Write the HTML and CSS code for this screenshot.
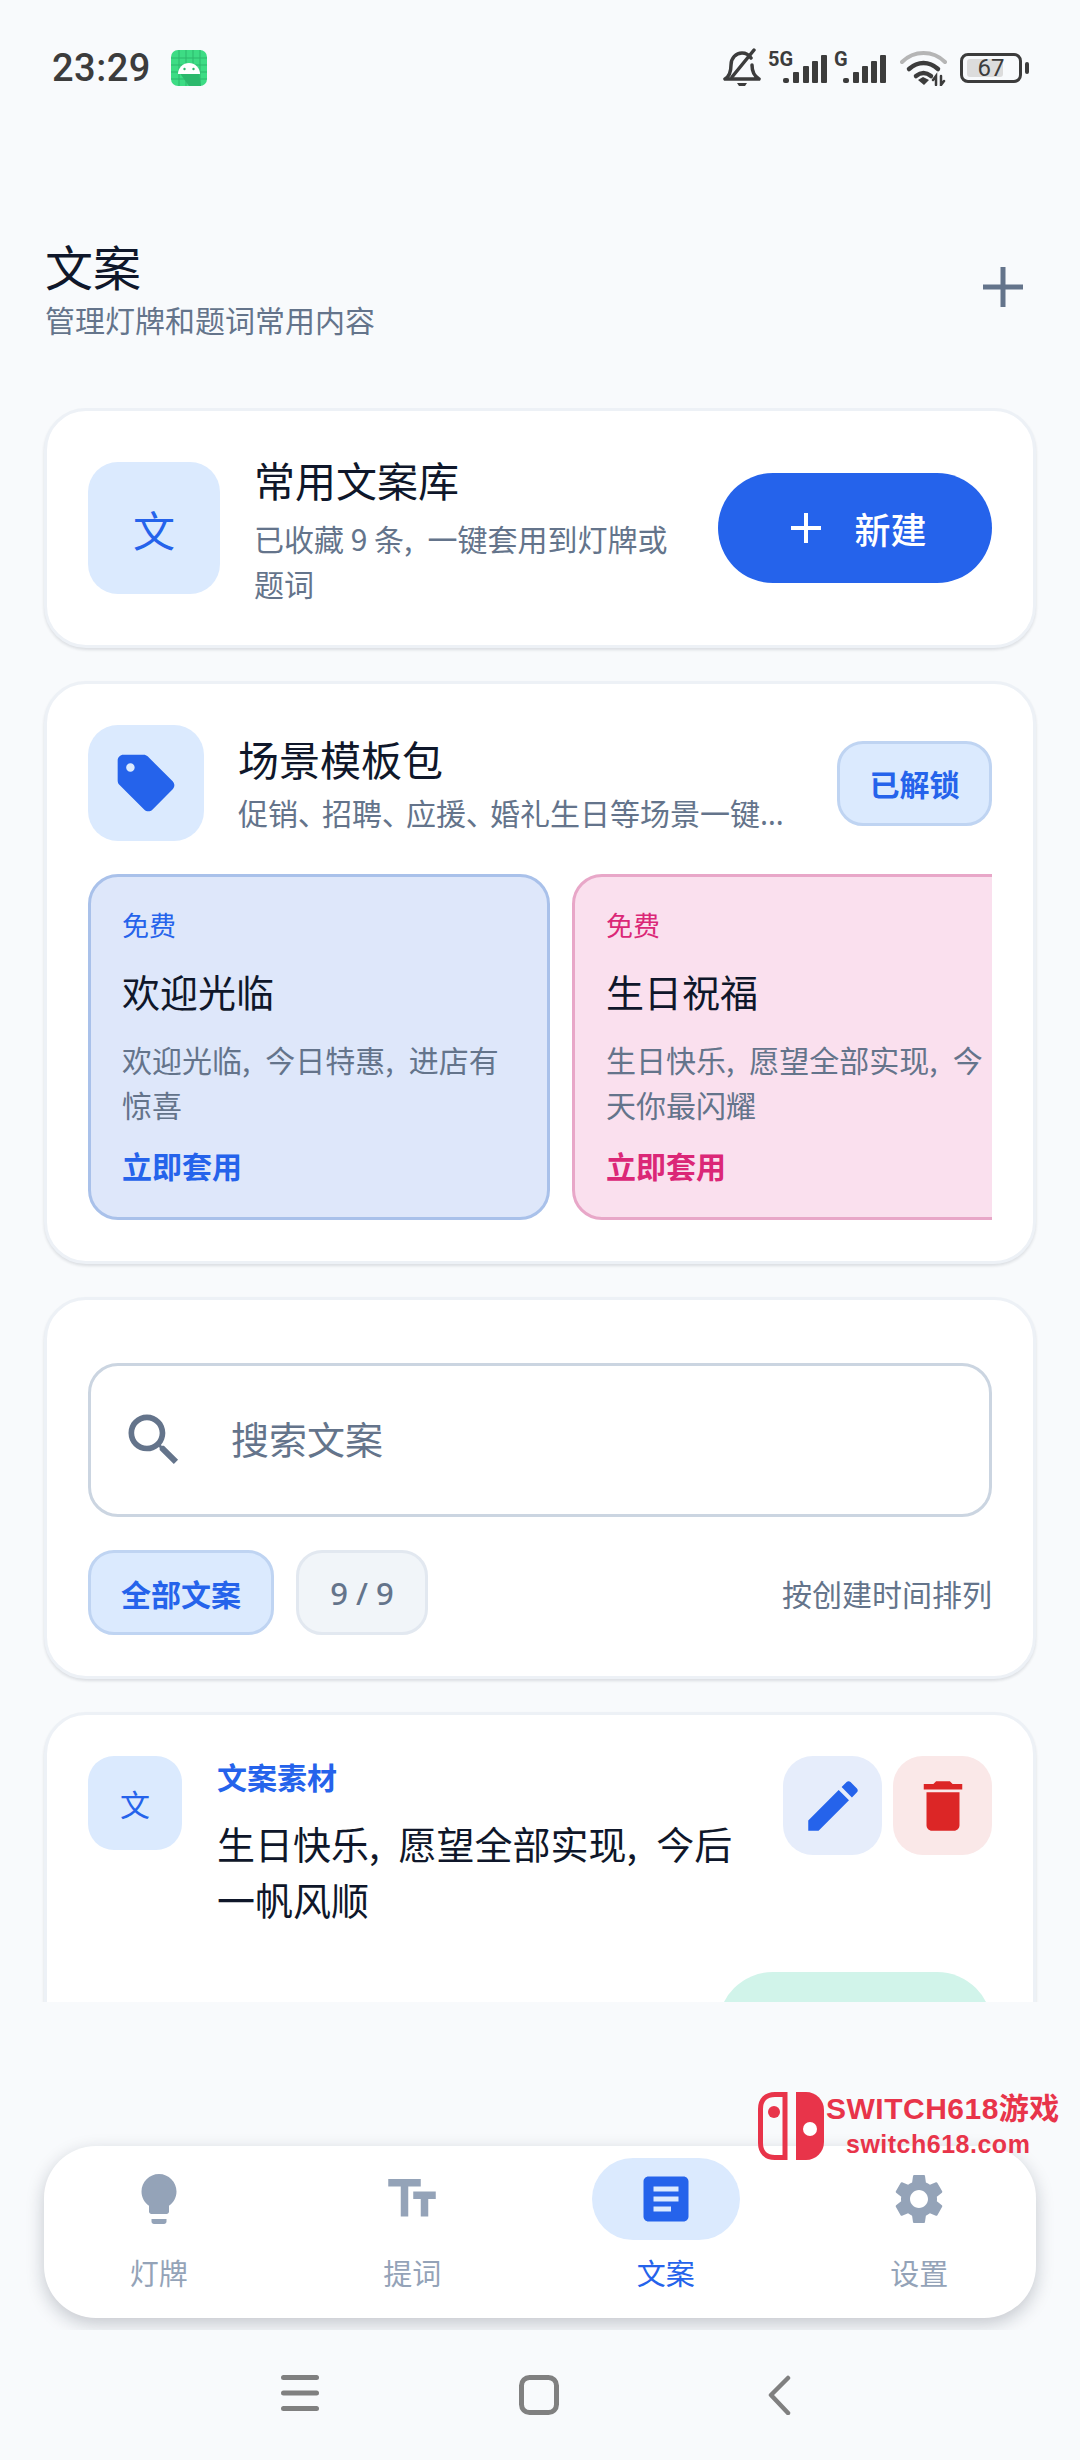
FILE: index.html
```html
<!DOCTYPE html>
<html lang="zh-CN">
<head>
  <meta charset="UTF-8">
  <meta name="viewport" content="width=device-width, initial-scale=1.0">
  <title>文案</title>
  <link rel="stylesheet" href="styles.css">
</head>
<body>
  <div class="phone">
    <div class="status-bar">
      <div class="status-left">
        <span class="clock">23:29</span>
        <svg class="app-badge" width="36" height="36" viewBox="0 0 36 36">
          <rect width="36" height="36" rx="7" fill="#3ddc84"/>
          <path d="M8 22H28L30 36H18z" fill="#2cb86c"/>
          <path d="M8 0V36M15 0V36M22 0V36M29 0V36M0 8H36M0 15H36M0 22H36M0 29H36" stroke="#2cb86c" stroke-width="1"/>
          <path d="M7 24a11 11 0 0 1 22 0z" fill="#fff"/>
          <circle cx="13.500" cy="19" r="1.200" fill="#2cb86c"/>
          <circle cx="22.500" cy="19" r="1.200" fill="#2cb86c"/>
        </svg>
      </div>
      <div class="status-right">
        <svg class="st-bell" width="38" height="40" viewBox="0 0 38 40" fill="none" stroke="#3c3c3c" stroke-width="3.500" stroke-linecap="round" stroke-linejoin="round">
          <path d="M2 31c5-3 6-8 6-14 0-7 5-12 11-12 4 0 7 2 9 5M29 17c0 6 2 11 7 14H2"/>
          <path d="M31 2 9 29"/>
          <path d="M14 35h10l-2 3h-6z" fill="#3c3c3c" stroke="none"/>
        </svg>
        <svg class="st-sim1" width="60" height="34" viewBox="0 0 60 34" fill="#3c3c3c">
          <text x="0" y="15" class="net-label">5G</text>
          <rect x="15" y="27" width="6" height="5" rx="2"/>
          <rect x="25" y="21" width="6" height="11" rx="1"/>
          <rect x="35" y="15" width="6" height="17" rx="1"/>
          <rect x="44" y="10" width="6" height="22" rx="1"/>
          <rect x="53" y="4" width="6" height="28" rx="1"/>
        </svg>
        <svg class="st-sim2" width="53" height="34" viewBox="0 0 53 34" fill="#3c3c3c">
          <text x="0" y="15" class="net-label">G</text>
          <rect x="9" y="27" width="6" height="5" rx="2"/>
          <rect x="19" y="21" width="6" height="11" rx="1"/>
          <rect x="28" y="15" width="6" height="17" rx="1"/>
          <rect x="37" y="10" width="6" height="22" rx="1"/>
          <rect x="46" y="4" width="6" height="28" rx="1"/>
        </svg>
        <svg class="st-wifi" width="48" height="36" viewBox="0 0 48 36" fill="none" stroke-linecap="round">
          <path d="M2 12C14 0 33 0 45 12" stroke="#b5b5b5" stroke-width="4"/>
          <path d="M9 19c9-8 20-8 29 0" stroke="#3c3c3c" stroke-width="4.500"/>
          <path d="M16 26c5-4 10-4 15 0" stroke="#3c3c3c" stroke-width="4.500"/>
          <path d="M18 30l5-3 6 3-5 5z" fill="#3c3c3c"/>
          <path d="M36 35v-9l-3 4M41 26v9l3-4" stroke="#3c3c3c" stroke-width="2.500"/>
        </svg>
        <div class="battery">
          <div class="battery-body">
            <span class="battery-fill"></span>
            <span class="battery-num">67</span>
          </div>
          <span class="battery-tip"></span>
        </div>
      </div>
    </div>

    <header class="page-head">
      <div>
        <h1>文案</h1>
        <p>管理灯牌和题词常用内容</p>
      </div>
      <svg class="head-add" width="40" height="40" viewBox="0 0 40 40" stroke="#64748b" stroke-width="5"><path d="M20 0V40M0 20H40"/></svg>
    </header>

    <main class="scroller">
      <section class="card library">
        <div class="wen-box">文</div>
        <div class="library-text">
          <h2>常用文案库</h2>
          <p>已收藏 9 条<i>,</i>一键套用到灯牌或题词</p>
        </div>
        <button class="new-btn">
          <svg width="30" height="30" viewBox="0 0 30 30" stroke="#fff" stroke-width="4"><path d="M15 0V30M0 15H30"/></svg>
          <span>新建</span>
        </button>
      </section>

      <section class="card packs">
        <div class="packs-head">
          <div class="tag-box">
            <svg width="68" height="68" viewBox="0 0 24 24" fill="#2563eb"><path d="M21.41 11.41l-8.83-8.83c-.37-.37-.88-.58-1.41-.58H4c-1.1 0-2 .9-2 2v7.17c0 .53.21 1.04.59 1.41l8.83 8.83c.78.78 2.05.78 2.83 0l7.17-7.17c.78-.78.78-2.04-.01-2.83zM6.5 8C5.67 8 5 7.33 5 6.5S5.67 5 6.5 5 8 5.67 8 6.5 7.33 8 6.5 8z"/></svg>
          </div>
          <div class="packs-text">
            <h2>场景模板包</h2>
            <p>促销<u>、</u>招聘<u>、</u>应援<u>、</u>婚礼生日等场景一键套用模板</p>
          </div>
          <span class="unlocked">已解锁</span>
        </div>
        <div class="pack-row">
          <article class="pack pack-blue">
            <small>免费</small>
            <h3>欢迎光临</h3>
            <p>欢迎光临<i>,</i>今日特惠<i>,</i>进店有惊喜</p>
            <b>立即套用</b>
          </article>
          <article class="pack pack-pink">
            <small>免费</small>
            <h3>生日祝福</h3>
            <p>生日快乐<i>,</i>愿望全部实现<i>,</i>今天你最闪耀</p>
            <b>立即套用</b>
          </article>
        </div>
      </section>

      <section class="card finder">
        <div class="search">
          <svg width="68" height="68" viewBox="0 0 24 24" fill="#64748b"><path d="M15.5 14h-.79l-.28-.27C15.41 12.59 16 11.11 16 9.5 16 5.91 13.09 3 9.5 3S3 5.91 3 9.5 5.91 16 9.5 16c1.61 0 3.09-.59 4.23-1.57l.27.28v.79l5 4.99L20.49 19l-4.99-5zm-6 0C7.01 14 5 11.99 5 9.5S7.01 5 9.5 5 14 7.01 14 9.5 11.99 14 9.5 14z"/></svg>
          <span>搜索文案</span>
        </div>
        <div class="filters">
          <span class="chip chip-on">全部文案</span>
          <span class="chip chip-count">9 / 9</span>
          <span class="sort">按创建时间排列</span>
        </div>
      </section>

      <section class="card entry">
        <div class="entry-top">
          <div class="entry-icon">文</div>
          <div class="entry-text">
            <h4>文案素材</h4>
            <p>生日快乐<i>,</i>愿望全部实现<i>,</i>今后一帆风顺</p>
          </div>
          <div class="entry-actions">
            <span class="act act-edit">
              <svg width="66" height="66" viewBox="0 0 24 24" fill="#2563eb"><path d="M3 17.25V21h3.75L17.81 9.94l-3.75-3.75L3 17.25zM20.71 7.04c.39-.39.39-1.02 0-1.41l-2.34-2.34c-.39-.39-1.02-.39-1.41 0l-1.83 1.83 3.75 3.75 1.83-1.83z"/></svg>
            </span>
            <span class="act act-del">
              <svg width="66" height="66" viewBox="0 0 24 24" fill="#dc2626"><path d="M6 19c0 1.1.9 2 2 2h8c1.1 0 2-.9 2-2V7H6v12zM19 4h-3.5l-1-1h-5l-1 1H5v2h14V4z"/></svg>
            </span>
          </div>
        </div>
        <div class="entry-apply"></div>
      </section>
    </main>

    <div class="nav-wrap">
      <nav class="tabbar">
        <div class="tab">
          <span class="tab-icon"><svg width="60" height="60" viewBox="0 0 24 24" fill="#94a3b8"><path d="M9 21c0 .55.45 1 1 1h4c.55 0 1-.45 1-1v-1H9v1zm3-19C8.14 2 5 5.14 5 9c0 2.38 1.19 4.47 3 5.74V17c0 .55.45 1 1 1h6c.55 0 1-.45 1-1v-2.26c1.81-1.27 3-3.36 3-5.74 0-3.86-3.14-7-7-7z"/></svg></span>
          <span>灯牌</span>
        </div>
        <div class="tab">
          <span class="tab-icon"><svg width="60" height="60" viewBox="0 0 24 24" fill="#94a3b8"><path d="M2.5 4v3h5v12h3V7h5V4h-13zm19 5h-9v3h3v7h3v-7h3V9z"/></svg></span>
          <span>提词</span>
        </div>
        <div class="tab tab-on">
          <span class="tab-icon"><svg width="60" height="60" viewBox="0 0 24 24" fill="#2563eb"><path d="M19 3H5c-1.1 0-2 .9-2 2v14c0 1.1.9 2 2 2h14c1.1 0 2-.9 2-2V5c0-1.1-.9-2-2-2zm-5 14H7v-2h7v2zm3-4H7v-2h10v2zm0-4H7V7h10v2z"/></svg></span>
          <span>文案</span>
        </div>
        <div class="tab">
          <span class="tab-icon"><svg width="60" height="60" viewBox="0 0 24 24" fill="#94a3b8"><path d="M19.14 12.94c.04-.3.06-.61.06-.94 0-.32-.02-.64-.07-.94l2.03-1.58c.18-.14.23-.41.12-.61l-1.92-3.32c-.12-.22-.37-.29-.59-.22l-2.39.96c-.5-.38-1.03-.7-1.62-.94l-.36-2.54c-.04-.24-.24-.41-.48-.41h-3.84c-.24 0-.43.17-.47.41l-.36 2.54c-.59.24-1.13.57-1.62.94l-2.39-.96c-.22-.08-.47 0-.59.22L2.74 8.87c-.12.21-.08.47.12.61l2.03 1.58c-.05.3-.09.63-.09.94s.02.64.07.94l-2.03 1.58c-.18.14-.23.41-.12.61l1.92 3.32c.12.22.37.29.59.22l2.39-.96c.5.38 1.03.7 1.62.94l.36 2.54c.05.24.24.41.48.41h3.84c.24 0 .44-.17.47-.41l.36-2.54c.59-.24 1.13-.56 1.62-.94l2.39.96c.22.08.47 0 .59-.22l1.92-3.32c.12-.22.07-.47-.12-.61l-2.01-1.58zM12 15.6c-1.98 0-3.6-1.62-3.6-3.6s1.62-3.6 3.6-3.6 3.6 1.62 3.6 3.6-1.62 3.6-3.6 3.6z"/></svg></span>
          <span>设置</span>
        </div>
      </nav>
    </div>

    <div class="sys-nav">
      <svg width="38" height="36" viewBox="0 0 38 36" fill="#808080"><rect width="38" height="5" rx="2.500"/><rect y="15.500" width="38" height="5" rx="2.500"/><rect y="31" width="38" height="5" rx="2.500"/></svg>
      <svg width="40" height="40" viewBox="0 0 40 40" fill="none" stroke="#808080" stroke-width="5"><rect x="2.500" y="2.500" width="35" height="35" rx="8"/></svg>
      <svg class="sys-back" width="24" height="40" viewBox="0 0 24 40" fill="none" stroke="#808080" stroke-width="4.500" stroke-linecap="round" stroke-linejoin="round"><path d="M21 3 4 20l17 18"/></svg>
    </div>

    <!-- site stamp sits over the tab bar -->
    <div class="stamp">
      <svg width="66" height="68" viewBox="0 0 66 68">
        <path d="M27 2.500H17C8 2.500 2.500 8 2.500 17v34c0 9 5.500 14.500 14.500 14.500h10z" fill="none" stroke="#e8344a" stroke-width="5"/>
        <circle cx="16" cy="20" r="6" fill="#e8344a"/>
        <path d="M38 0h10c10 0 18 8 18 18v32c0 10-8 18-18 18H38z" fill="#e8344a"/>
        <circle cx="52" cy="37" r="7" fill="#fff"/>
      </svg>
      <div class="stamp-text">
        <div class="stamp-name">SWITCH618游戏</div>
        <div class="stamp-url">switch618.com</div>
      </div>
    </div>
  </div>
</body>
</html>
```

FILE: styles.css
```css
* {
  margin: 0;
  padding: 0;
  box-sizing: border-box;
}

body {
  background: #f8fafc;
  color: #0f172a;
  font-family: "Noto Sans CJK SC", "Noto Sans", sans-serif;
}

.phone {
  width: 1080px;
  height: 2460px;
  display: flex;
  flex-direction: column;
  position: relative;
  overflow: hidden;
}

/* narrow comma used through the copy */
i {
  font-style: normal;
  margin-right: 0.5em;
}

/* status bar */
.status-bar {
  height: 135px;
  flex: none;
  padding: 0 51px 0 52px;
  display: flex;
  justify-content: space-between;
  align-items: center;
}

.status-left {
  display: flex;
  align-items: center;
  gap: 20px;
}

.clock {
  font-family: Roboto, sans-serif;
  font-size: 38px;
  font-weight: 500;
  letter-spacing: 0.5px;
  color: #3c3c3c;
}

.status-right {
  display: flex;
  align-items: center;
}

.st-sim1 { margin-left: 7px; }
.st-sim2 { margin-left: 6px; }
.st-wifi { margin-left: 13px; }

.net-label {
  font-family: Roboto, sans-serif;
  font-size: 20px;
  font-weight: 700;
}

.battery {
  display: flex;
  align-items: center;
  gap: 3px;
  margin-left: 12px;
}

.battery-body {
  width: 62px;
  height: 30px;
  border: 3px solid #3c3c3c;
  border-radius: 8px;
  position: relative;
  display: flex;
  align-items: center;
  justify-content: center;
}

.battery-fill {
  position: absolute;
  left: 4px;
  top: 3px;
  bottom: 3px;
  width: 36px;
  background: #dcdcdc;
  border-radius: 3px;
}

.battery-num {
  position: relative;
  font-family: Roboto, sans-serif;
  font-size: 24px;
  color: #3c3c3c;
}

.battery-tip {
  width: 4px;
  height: 12px;
  background: #3c3c3c;
  border-radius: 2px;
}

/* page heading */
.page-head {
  flex: none;
  height: 273px;
  padding: 101px 57px 64px 45px;
  display: flex;
  justify-content: space-between;
  align-items: flex-start;
}

.page-head h1 {
  font-size: 48px;
  font-weight: 400;
  line-height: 64px;
  margin-top: -3px;
}

.page-head p {
  font-size: 30px;
  line-height: 44px;
  color: #64748b;
}

.head-add {
  margin-top: 31px;
}

/* scrolling list */
.scroller {
  flex: none;
  height: 1594px;
  padding: 0 44px;
  overflow: hidden;
  display: flex;
  flex-direction: column;
  gap: 33px;
}

.card {
  flex: none;
  background: #fff;
  border: 3px solid #edf1f6;
  border-radius: 42px;
  box-shadow: 0 2px 3px rgba(15, 23, 42, 0.12);
  padding: 0 41px;
}

.wen-box {
  width: 132px;
  height: 132px;
  flex: none;
  background: #dbeafe;
  border-radius: 30px;
  color: #2563eb;
  font-size: 42px;
  display: flex;
  align-items: center;
  justify-content: center;
}

.library {
  height: 240px;
  display: flex;
  align-items: center;
}

.library-text {
  width: 433px;
  margin-left: 34px;
  margin-right: 31px;
  flex: none;
}

h2 {
  font-size: 41px;
  font-weight: 400;
  line-height: 56px;
}

.library-text p {
  margin-top: 9px;
  font-size: 30px;
  line-height: 45px;
  color: #64748b;
}

.new-btn {
  width: 274px;
  height: 110px;
  flex: none;
  border: none;
  border-radius: 55px;
  background: #2563eb;
  color: #fff;
  font-family: inherit;
  font-size: 36px;
  font-weight: 500;
  padding-left: 8px;
  display: flex;
  align-items: center;
  justify-content: center;
  gap: 33px;
}

.packs {
  height: 583px;
  padding-top: 41px;
}

.packs-head {
  display: flex;
  align-items: center;
}

.tag-box {
  width: 116px;
  height: 116px;
  flex: none;
  background: #dbeafe;
  border-radius: 30px;
  display: flex;
  align-items: center;
  justify-content: center;
}

.packs-text {
  width: 550px;
  margin-left: 34px;
  flex: none;
}

.packs-text p {
  margin-top: 6px;
  font-family: "Noto Sans", "Noto Sans CJK SC", sans-serif;
  font-feature-settings: "palt";
  font-size: 30px;
  line-height: 44px;
  color: #64748b;
  white-space: nowrap;
  overflow: hidden;
  text-overflow: ellipsis;
}

.packs-text u {
  text-decoration: none;
  margin-right: 0.3em;
}

.unlocked {
  width: 155px;
  height: 85px;
  flex: none;
  margin-left: auto;
  background: #dbeafe;
  border: 3px solid #bfd4f2;
  border-radius: 26px;
  color: #2563eb;
  font-size: 30px;
  font-weight: 700;
  display: flex;
  align-items: center;
  justify-content: center;
}

.pack-row {
  margin-top: 33px;
  display: flex;
  gap: 22px;
  overflow: hidden;
}

.pack {
  width: 462px;
  height: 346px;
  flex: none;
  border: 3px solid;
  border-radius: 30px;
  padding: 28px 20px 0 31px;
}

.pack small {
  display: block;
  font-size: 27px;
  line-height: 40px;
}

.pack h3 {
  margin-top: 19px;
  font-size: 38px;
  font-weight: 400;
  line-height: 54px;
}

.pack p {
  margin-top: 19px;
  font-size: 30px;
  line-height: 45px;
  color: #64748b;
}

.pack b {
  display: block;
  margin-top: 17px;
  font-size: 30px;
  line-height: 42px;
}

.pack-blue {
  background: #dee7fa;
  border-color: #a9c1ea;
}

.pack-blue small, .pack-blue b { color: #2563eb; }

.pack-pink {
  background: #fae0ee;
  border-color: #e8a7c8;
}

.pack-pink small, .pack-pink b { color: #db2777; }

.finder {
  height: 382px;
  padding-top: 63px;
}

.search {
  height: 154px;
  border: 3px solid #cbd5e1;
  border-radius: 30px;
  padding-left: 29px;
  display: flex;
  align-items: center;
  gap: 43px;
  font-size: 38px;
  color: #64748b;
}

.search span {
  margin-bottom: 6px;
}

.filters {
  margin-top: 33px;
  display: flex;
  align-items: center;
  gap: 22px;
}

.chip {
  height: 85px;
  border: 3px solid;
  border-radius: 26px;
  font-size: 30px;
  display: flex;
  align-items: center;
  justify-content: center;
}

.chip-on {
  width: 186px;
  background: #dbeafe;
  border-color: #bfd4f2;
  color: #2563eb;
  font-weight: 700;
}

.chip-count {
  width: 132px;
  background: #f1f5f9;
  border-color: #e2e8f0;
  color: #64748b;
  font-family: "Noto Sans", sans-serif;
  font-size: 31px;
  font-weight: 500;
}

.sort {
  margin-left: auto;
  font-size: 30px;
  color: #64748b;
}

.entry {
  height: 340px;
  padding-top: 41px;
}

.entry-top {
  display: flex;
  align-items: flex-start;
}

.entry-icon {
  width: 94px;
  height: 94px;
  flex: none;
  background: #dbeafe;
  border-radius: 26px;
  color: #2563eb;
  font-size: 30px;
  display: flex;
  align-items: center;
  justify-content: center;
}

.entry-text {
  width: 530px;
  margin-left: 35px;
  flex: none;
}

.entry-text h4 {
  font-size: 30px;
  font-weight: 700;
  line-height: 40px;
  color: #2563eb;
}

.entry-text p {
  margin-top: 19px;
  font-size: 38px;
  line-height: 56px;
}

.entry-actions {
  margin-left: auto;
  display: flex;
  gap: 11px;
}

.act {
  width: 99px;
  height: 99px;
  border-radius: 30px;
  display: flex;
  align-items: center;
  justify-content: center;
}

.act-edit { background: #e6edfb; }
.act-del { background: #fae8e8; }

.entry-apply {
  width: 274px;
  height: 110px;
  margin-left: auto;
  background: #d1f4ea;
  border-radius: 55px;
  position: relative;
  top: 45px;
}

/* bottom tabs */
.nav-wrap {
  flex: none;
  height: 328px;
  padding: 144px 44px 0;
  overflow: hidden;
}

.tabbar {
  height: 172px;
  background: #fff;
  border-radius: 52px;
  box-shadow: 0 6px 18px rgba(15, 23, 42, 0.22);
  padding: 12px 2px 0 0;
  display: grid;
  grid-template-columns: repeat(4, 253.5px);
  justify-content: center;
  justify-items: center;
}

.tab {
  display: flex;
  flex-direction: column;
  align-items: center;
  gap: 12px;
  font-size: 29px;
  line-height: 40px;
  color: #94a3b8;
}

.tab-icon {
  width: 148px;
  height: 82px;
  border-radius: 41px;
  display: flex;
  align-items: center;
  justify-content: center;
}

.tab-on { color: #2563eb; }
.tab-on .tab-icon { background: #dbeafe; }

.sys-nav {
  flex: 1;
  padding: 45px 0 0 281px;
  display: flex;
  gap: 200px;
  align-items: flex-start;
}

.sys-back {
  margin-left: 8px;
}

/* stamp */
.stamp {
  position: absolute;
  left: 758px;
  top: 2092px;
  display: flex;
  gap: 2px;
  color: #e8344a;
  font-family: "Liberation Sans", "Noto Sans CJK SC", sans-serif;
  font-weight: 700;
}

.stamp-name {
  font-size: 30px;
  line-height: 34px;
  letter-spacing: 0.5px;
  white-space: nowrap;
}

.stamp-url {
  margin-top: 4px;
  padding-left: 20px;
  font-size: 25px;
  line-height: 28px;
  letter-spacing: 0.5px;
  white-space: nowrap;
}
```
